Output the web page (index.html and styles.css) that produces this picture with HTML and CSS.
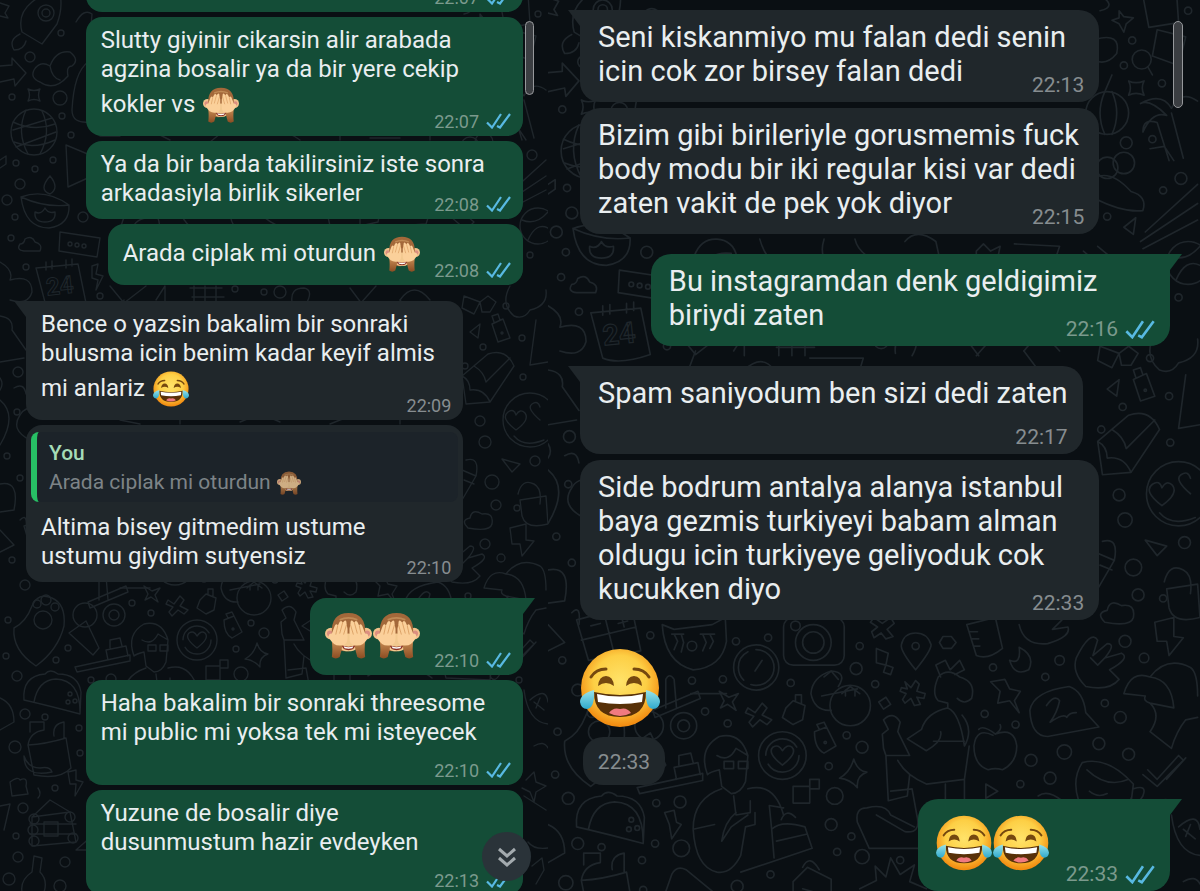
FILE: index.html
```html
<!DOCTYPE html>
<html lang="tr">
<head>
    <meta charset="UTF-8">
    <meta name="viewport" content="width=device-width, initial-scale=1.0">
    <title>Sohbet</title>

    <link rel="stylesheet" href="styles.css">
</head>
<body>
    <!-- Shared icons -->
    <svg class="defs" aria-hidden="true">
        <defs>
            <radialGradient id="face" cx="50%" cy="42%" r="56%">
                <stop offset="0" stop-color="#ffe36a"/>
                <stop offset=".6" stop-color="#fdcf45"/>
                <stop offset="1" stop-color="#f28d12"/>
            </radialGradient>
            <linearGradient id="tear" x1="0" y1="0" x2="0" y2="1">
                <stop offset="0" stop-color="#9be4ea"/>
                <stop offset="1" stop-color="#2fa9cc"/>
            </linearGradient>
            <linearGradient id="arm" x1="0" y1="0" x2="0" y2="1">
                <stop offset="0" stop-color="#c58a52"/>
                <stop offset="1" stop-color="#8b4c22"/>
            </linearGradient>
        </defs>
        <symbol id="laugh" viewBox="0 0 80 80">
            <circle cx="40" cy="40" r="39" fill="url(#face)"/>
            <path d="M11 29Q16 21 26 21M54 21Q64 21 69 29" fill="none" stroke="#75480f" stroke-width="3" stroke-linecap="round"/>
            <path d="M18 38Q19 28 26 28T34 38Q26 32 18 38zM46 38Q47 28 54 28T62 38Q54 32 46 38z" fill="#75480f"/>
            <path d="M14 44Q40 50 66 44Q66 69 40 69T14 44z" fill="#573008"/>
            <path d="M17 46Q40 51 63 46L62 54Q40 58 18 54z" fill="#fff"/>
            <path d="M29 65Q33 59 40 61Q47 59 51 65Q40 71 29 65z" fill="#f07a80"/>
            <path d="M14 42Q0 46 0 54Q1 61 7 61Q15 60 14 42zM66 42Q80 46 80 54Q79 61 73 61Q65 60 66 42z" fill="url(#tear)"/>
        </symbol>
        <symbol id="monkey" viewBox="0 0 48 48">
            <circle cx="6" cy="22" r="6" fill="#f3c28c"/>
            <circle cx="42" cy="22" r="6" fill="#f3c28c"/>
            <circle cx="5" cy="22" r="3" fill="#dc8f80"/>
            <circle cx="43" cy="22" r="3" fill="#dc8f80"/>
            <path d="M7 22Q6 1 24 1T41 22Q42 38 24 40T7 22z" fill="#a3683a"/>
            <path d="M15 8Q24 4 33 8" fill="none" stroke="#bf8a55" stroke-width="2"/>
            <path d="M14 30Q16 22 24 22T34 30Q35 40 24 40T14 30z" fill="#f2c98f"/>
            <path d="M17 34Q24 37 31 34Q30 39 24 39T17 34z" fill="#8a2f22"/>
            <path d="M19 35Q24 37 29 35L28 37Q24 38 20 37z" fill="#fff"/>
            <path d="M7 30L18 32Q17 40 15 46Q11 49 7 46Q8 38 7 30zM41 30L30 32Q31 40 33 46Q37 49 41 46Q40 38 41 30z" fill="url(#arm)"/>
            <path d="M4 26Q3 22 7 22L10 14Q12 11 13 14L15 10Q17 8 18 11L20 9Q22 8 22 12L23 17L23 27Q23 33 18 34Q9 36 4 26z" fill="#fbd09a"/>
            <path d="M44 26Q45 22 41 22L38 14Q36 11 35 14L33 10Q31 8 30 11L28 9Q26 8 26 12L25 17L25 27Q25 33 30 34Q39 36 44 26z" fill="#fbd09a"/>
            <path d="M13 14L11 23M18 11L15 22M22 13L19 23M35 14L37 23M30 11L33 22M26 13L29 23" fill="none" stroke="#dda367" stroke-width="1"/>
        </symbol>
        <symbol id="checks" viewBox="0 0 25 16">
            <path d="M1 9.500L6 14.500L15 1M11 13L14 14.500L24 1" fill="none" stroke="#58b9e2" stroke-width="2.200"/>
        </symbol>

        <!-- Wallpaper doodles -->
        <symbol id="doodles" viewBox="0 0 548 900">
            <g fill="none" stroke="#1f262b" stroke-width="1.400" stroke-linejoin="round" stroke-linecap="round">
                <!-- left edge, top to bottom -->
                <path d="M0 3L9 6L5 13L8 18L0 16M22 32Q17 14 32 2Q44 -8 60 -6Q63 8 57 24L42 44zM20 34Q8 40 14 50Q24 50 26 41M76 22Q84 8 92 14L88 62Q74 72 72 110Q72 124 90 122"/>
                <circle cx="46" cy="13" r="8"/><circle cx="46" cy="13" r="4"/>
                <path d="M0 66L12 65L12 58L26 73L15 86L14 79L0 82M34 70Q40 60 50 66Q56 50 70 52Q80 60 72 66Q66 66 68 76Q54 92 40 82Q30 78 34 70zM50 66Q52 78 60 80"/>
                <path d="M28 89Q34 92 40 89Q37 95 40 101Q34 98 28 101Q31 95 28 89z"/>
                <circle cx="34" cy="132" r="23"/><path d="M13 122Q34 132 55 124M14 142Q34 150 55 140M26 110Q16 132 28 154M42 111Q52 132 40 154M13 130L52 118M16 147L56 132"/>
                <path d="M66 145L90 155M66 145L68 187L90 177M0 160L6 156V164L0 168"/>
                <path d="M21 197Q45 208 69 205Q70 225 49 228Q25 228 21 197zM21 197Q45 188 69 205M50 176Q38 190 50 194Q60 188 50 176M35 212Q34 222 45 222Q56 222 55 212Q48 214 45 208Q41 215 35 212z"/>
                <path d="M24 251Q16 250 20 244Q24 244 25 239Q32 235 35 242Q43 244 40 251zM60 232L100 238L97 257L59 251z"/>
                <circle cx="70" cy="244" r="2"/><circle cx="77" cy="245" r="2"/><circle cx="84" cy="246" r="2"/>
                <path d="M36 268L78 264L86 303Q60 312 46 306zM46 270V262M52 269V261M66 268V260M72 266V259M0 262Q14 270 10 280Q32 274 32 292Q28 306 10 300M92 266L98 264L96 274L103 276L96 290L98 280L92 278z"/>
                <path d="M0 316Q14 318 12 330L26 350M0 362L24 358M0 378Q4 384 0 390M14 388Q24 382 26 394M0 400Q18 415 0 445M30 440Q10 430 20 415Q26 402 60 410M0 484Q20 480 14 510L0 512M0 530L14 545L0 552M20 520Q28 512 26 530"/>
                <path d="M14 628Q26 622 32 606Q38 592 52 598Q66 604 64 626Q58 650 36 666Q12 650 14 628z"/><circle cx="43" cy="620" r="9"/><circle cx="37" cy="604" r="4"/><circle cx="46" cy="600" r="5"/><circle cx="55" cy="607" r="4"/>
                <path d="M69 633L86 621L99 648L93 655zM75 667L130 655L130 661L77 672zM108 660L106 650L126 646L128 656M110 648V640L120 638L122 646"/>
                <path d="M24 700Q22 676 45 674Q50 668 58 674Q78 674 81 692L80 714Q50 706 24 700zM34 702Q38 680 56 679Q80 680 80 712"/>
                <circle cx="70" cy="694" r="2"/><circle cx="75" cy="701" r="2"/><circle cx="68" cy="702" r="2"/>
                <path d="M0 698Q14 704 14 722L0 730M28 745Q30 732 44 730V722H30V732M28 745L34 775Q60 780 71 768L66 738Q46 744 28 745M54 736Q52 724 64 722V738M24 756Q24 778 52 772Q50 766 40 768Q28 768 24 756zM68 772L76 770L76 780L83 782L75 796L76 784L70 784zM10 782Q18 776 20 780Q28 776 26 786L28 794L12 796z"/>
                <path d="M32 817L50 800L70 812M38 788Q42 794 38 798M32 817L70 812L76 842L32 846zM44 822H58V836H44zM30 824H76M30 834H76"/>
                <circle cx="34" cy="819" r="5"/><circle cx="33" cy="830" r="5"/><circle cx="34" cy="841" r="5"/><circle cx="70" cy="817" r="5"/><circle cx="73" cy="838" r="5"/>
                <path d="M0 806L10 804L4 830M34 856L42 858L40 872Q48 880 44 892H22Q20 880 32 872zM76 850L92 836V850z"/>

                <!-- strips between the bubbles -->
                <path d="M110 286L124 303L146 286M156 300L165 286V304M190 288H222M194 286V304M205 286V304M216 286V304M192 297H224M292 302Q290 288 304 288Q314 290 306 304M350 288L362 304M376 286L360 304M400 300Q414 280 430 300M120 232Q124 205 142 206T160 232M132 230Q136 216 154 218M178 206Q184 228 202 232M232 206Q224 232 260 236M258 206Q262 224 298 232M300 208Q310 196 326 208L330 226M360 216L366 210L372 216L380 212L378 222L360 226zM392 210L430 212L426 224L396 226"/>
                <path d="M100 136H120M150 130L170 140M210 142L225 130M260 135Q280 125 300 140M340 140V130M370 138H400M430 132V140M120 420L140 424M180 424V416M240 422Q260 412 280 422M330 424L350 416M400 424V416M120 588H150M230 590L260 584M118 316L124 300M165 316Q180 302 190 316M220 306H265L262 316M400 300L412 316"/>

                <!-- large open area -->
                <path d="M24 526L70 514L78 552L34 560zM28 543L74 532M47 520L56 556M36 531L44 529M62 524L64 532M59 529L67 527M96 530L106 534L138 530L149 524L150 544Q146 566 122 568Q98 562 96 530zM106 538L109 544L106 551M112 538L114 545L112 553M130 538L133 545L130 552M136 538L139 544L136 550M104 538H114M128 538H140"/>
                <circle cx="121" cy="548" r="4"/><circle cx="175" cy="566" r="19"/><circle cx="175" cy="566" r="15" stroke-dasharray="28 7"/><path d="M174 569L180 560M99 600V576Q102 570 106 576L108 600M88 602L126 586L128 592L90 608z"/>
                <circle cx="114" cy="615" r="11"/><circle cx="114" cy="615" r="5"/><circle cx="85" cy="615" r="12"/>
                <rect x="198" y="524" width="51" height="40" rx="8"/><circle cx="223" cy="545" r="15"/><circle cx="223" cy="545" r="9"/><circle cx="208" cy="531" r="4"/>
                <path d="M274 524L281 529L288 524L291 529L285 534L290 540L284 542L280 537L274 541L272 536L277 532L271 528z"/>
                <path d="M309 568Q296 552 297 547Q299 537 309 537T322 547Q322 552 309 568z"/><circle cx="309" cy="548" r="3"/>
                <path d="M332 540L339 540L343 545L339 550H332L329 545zM352 530L376 524L382 550Q370 560 360 556zM355 536H361M356 542H362M358 548H363M396 530Q400 548 420 546Q440 540 437 532L424 534L432 526M396 549Q410 556 404 568Q392 574 388 560Q398 564 396 549z"/>
                <path d="M452 582Q440 570 444 558Q456 534 462 543L458 556L470 546Q478 546 468 558L482 554Q490 558 472 568L480 576Q472 586 452 582zM456 558L462 564L468 558M510 528L526 524L526 540L534 541L522 556L520 544L512 544z"/>
                <path d="M484 588Q490 568 506 574Q524 576 526 600L506 596Q500 594 502 590zM506 574Q520 556 540 566Q546 570 546 590M506 596Q516 606 506 620L524 634Q528 620 536 610L546 608M276 550L286 554L284 564L276 562zM284 564L290 566L288 572L282 570z"/>
                <path d="M244 582Q252 570 238 569Q222 574 221 588Q224 603 238 602"/><circle cx="254" cy="598" r="17"/><path d="M232 574L238 569L244 576M247 588L254 582L262 588M250 590V585M258 590V585"/>
                <path d="M144 586L152 591L160 588L155 595L158 602L151 597L145 600L148 594zM168 600L174 604L180 596L184 600L180 606L188 610L184 614L178 610L172 616L169 612L173 607L166 604zM200 600L206 594L216 598L214 610L206 614L197 608zM208 594V589H213V596M278 595L284 591L288 597L282 601z"/>
                <path d="M300 578L305 583L309 577L312 580L310 586L317 588L316 592L310 591L313 597L308 598L305 592L300 596L298 593L301 588L296 586L297 583L302 584z"/>
                <path d="M328 574Q322 588 328 594L336 596L336 600M328 574Q336 566 346 574Q360 578 356 592Q350 598 344 592M330 574L326 564L334 560L338 568L346 560L350 568L342 572M336 600Q318 604 314 618L302 626L318 636Q332 628 330 620M336 600Q346 604 350 632M324 628H350M350 632Q358 618 348 606M282 634L281 622L286 618L282 610Q290 602 296 612L294 620L304 640H284zM294 644Q300 656 318 664L350 660L354 632M350 660V690M334 664V688M304 656L302 674L286 678L284 640M288 670L306 668L310 690Q314 706 300 704L276 690M260 696Q258 684 268 684Q284 680 288 690L308 700M260 696L270 718H312"/>
                <path d="M372 578L384 576L388 584L397 586L392 594L396 604L388 594L378 596L380 586zM405 602Q408 586 438 582Q450 586 452 604L463 616L420 624Q406 624 405 602zM419 598Q426 588 430 594Q428 604 422 612Q434 604 436 608Q438 604 444 604"/>
                <path d="M374 623Q360 616 358 632Q358 648 370 652Q376 650 382 652Q394 646 394 632Q392 616 376 622Q366 614 362 618M376 622Q382 618 380 614"/>
                <circle cx="197" cy="640" r="20"/><circle cx="197" cy="640" r="14" stroke-dasharray="36 8"/><path d="M197 648Q184 638 189 633Q194 630 197 636Q201 630 205 633Q210 638 197 648zM224 620L234 616L242 632L232 638Q224 634 224 620zM228 618L226 614L232 612L234 616M257 643Q260 653 268 654Q259 657 260 667Q254 660 245 659Q254 654 257 643z"/>
                <circle cx="233" cy="629" r="1"/>
                <path d="M206 666H220V680H206zM220 660H228V668H220zM134 656Q126 634 144 624Q162 620 168 640L166 662Q162 672 154 672L146 666L144 652Q136 654 134 656M142 640Q152 646 158 634L168 640M148 645H156V651H148zM160 645H168V651H160zM146 668Q122 676 122 702Q124 734 142 738Q154 740 162 724L166 700L174 698V688M156 674L158 690L170 688V678M168 668Q190 662 198 690M158 688Q148 696 146 712L154 700L168 690M122 702L140 698M162 738L222 718L216 700Q196 694 188 702L190 726M188 702L186 682L198 684M192 712L218 706M196 694Q200 684 208 692"/>
                <path d="M98 688L106 686L108 696L112 698L104 710L102 698z"/>
                <path d="M449 646Q470 640 492 664L490 680L446 678Q440 660 449 646zM453 652Q470 668 488 660M492 668Q504 664 500 674Q494 684 490 676M455 670Q462 676 470 672M504 652L512 660L530 640L534 644L512 666L500 656M520 660L536 642M368 664L378 670L368 676zM412 674Q420 668 432 678"/>

                <!-- right edge, top to bottom -->
                <path d="M462 0Q480 10 464 14M480 14L484 19L492 20L486 25L484 32L480 25L474 22L480 20zM499 -4L528 -6L530 24L505 28zM512 30L536 36L530 60L508 52z"/>
                <circle cx="499" cy="55" r="8"/><path d="M504 61L508 68M460 38Q482 32 478 50Q470 60 460 56M488 73Q494 76 501 73Q498 79 501 85Q494 82 488 85Q491 79 488 73z"/>
                <circle cx="470" cy="100" r="18"/><path d="M468 82Q460 100 468 118M474 82Q482 100 474 118M468 82L474 68M522 140L512 108Q500 104 500 116Q508 98 520 102Q506 88 498 92Q516 82 524 96Q532 80 546 90M524 100L534 138M506 130L518 128L526 140"/>
                <circle cx="484" cy="142" r="9"/><circle cx="470" cy="146" r="9"/><path d="M460 154Q474 148 490 166Q504 170 500 182Q484 184 460 172M484 196L494 188L492 202zM502 200L546 160M498 208L546 176M500 214L546 190"/>
                <circle cx="538" cy="226" r="18"/><path d="M522 220Q536 226 548 212M528 240Q536 222 548 228M462 212L474 222L466 230L450 216M466 262Q480 250 490 262"/>
                <path d="M464 296L480 302L474 314L462 308zM480 302L488 296L496 302L490 312L482 312zM510 286Q500 304 514 316Q524 320 530 310Q548 306 546 290M492 324L503 319L510 338L498 342zM494 322L492 316L498 314L500 320M470 332L480 324L478 338z"/>
                <circle cx="502" cy="333" r="1"/><path d="M462 376L488 354Q506 348 514 366L490 402L466 404zM462 376Q470 380 470 390Q484 388 490 402M474 366Q484 372 486 382L510 358M536 320L530 365L548 362"/>
                <circle cx="530" cy="420" r="27"/><path d="M516 430Q500 418 508 412Q514 408 516 415Q520 408 525 413Q530 420 516 430zM540 420Q526 408 532 404Q538 400 540 407M514 436Q524 448 544 440M466 460Q480 456 476 476L462 500M462 470L476 476M464 480L474 484M502 459L520 464L512 472zM518 494Q522 478 534 484Q542 488 540 504M520 500L546 496L548 524Q526 530 522 516z"/>
                <path d="M468 528Q460 520 470 518Q472 508 482 514Q494 512 492 524Q490 532 468 528zM530 700Q546 686 548 702M524 690Q528 722 548 724M534 702L544 710M540 698L536 708M534 746Q544 740 548 748M526 780L534 772L536 782L546 786L536 792L534 802L530 792L522 788M528 842Q534 850 548 848M532 866L542 858L544 870L536 884M524 796L546 810"/>
                <path d="M90 780L104 740Q108 732 116 736L138 754L118 770zM206 780V746L218 734L238 744V780zM214 734Q220 722 228 736M214 752L228 756M212 762L228 766M262 752L276 745L275 733L284 742L288 726L296 740L308 732L304 746L318 752"/>

                <!-- loose bubbles -->
                <circle cx="60" cy="98" r="7"/><circle cx="30" cy="57" r="5"/><circle cx="61" cy="33" r="3"/><circle cx="12" cy="97" r="3"/><circle cx="62" cy="116" r="3"/><circle cx="71" cy="135" r="3"/><circle cx="16" cy="163" r="3"/><circle cx="35" cy="169" r="3"/><circle cx="53" cy="160" r="3"/><circle cx="20" cy="184" r="5"/><circle cx="7" cy="200" r="5"/><circle cx="83" cy="217" r="5"/><circle cx="15" cy="217" r="3"/><circle cx="11" cy="238" r="3"/><circle cx="26" cy="267" r="3"/><circle cx="100" cy="296" r="3"/><circle cx="235" cy="289" r="3"/><circle cx="264" cy="292" r="3"/><circle cx="280" cy="292" r="6"/>
                <circle cx="18" cy="372" r="5"/><circle cx="17" cy="412" r="3"/><circle cx="7" cy="456" r="3"/><circle cx="20" cy="478" r="3"/><circle cx="12" cy="560" r="3"/><circle cx="25" cy="585" r="5"/><circle cx="8" cy="620" r="3"/><circle cx="6" cy="656" r="3"/><circle cx="17" cy="676" r="5"/><circle cx="56" cy="660" r="3"/><circle cx="68" cy="648" r="3"/><circle cx="25" cy="714" r="5"/><circle cx="45" cy="717" r="3"/><circle cx="15" cy="747" r="6"/><circle cx="79" cy="728" r="3"/><circle cx="80" cy="753" r="3"/><circle cx="23" cy="808" r="5"/><circle cx="55" cy="788" r="3"/><circle cx="16" cy="836" r="3"/><circle cx="18" cy="857" r="5"/><circle cx="65" cy="862" r="5"/><circle cx="9" cy="879" r="6"/><circle cx="60" cy="886" r="6"/>
                <circle cx="86" cy="539" r="3"/><circle cx="158" cy="544" r="3"/><circle cx="185" cy="541" r="3"/><circle cx="262" cy="548" r="3"/><circle cx="259" cy="567" r="5"/><circle cx="121" cy="577" r="3"/><circle cx="147" cy="576" r="3"/><circle cx="204" cy="579" r="3"/><circle cx="275" cy="580" r="3"/><circle cx="374" cy="566" r="3"/><circle cx="430" cy="560" r="4"/><circle cx="418" cy="574" r="3"/><circle cx="485" cy="544" r="5"/><circle cx="501" cy="558" r="4"/><circle cx="132" cy="603" r="3"/><circle cx="151" cy="613" r="3"/><circle cx="251" cy="623" r="3"/><circle cx="264" cy="633" r="5"/><circle cx="236" cy="649" r="3"/><circle cx="367" cy="605" r="3"/><circle cx="393" cy="614" r="3"/><circle cx="468" cy="596" r="3"/><circle cx="481" cy="608" r="5"/><circle cx="463" cy="630" r="5"/><circle cx="434" cy="637" r="6"/><circle cx="488" cy="639" r="5"/><circle cx="406" cy="644" r="5"/><circle cx="422" cy="659" r="5"/><circle cx="397" cy="664" r="3"/><circle cx="241" cy="674" r="7"/><circle cx="238" cy="698" r="5"/><circle cx="255" cy="708" r="3"/><circle cx="91" cy="680" r="3"/><circle cx="111" cy="679" r="5"/><circle cx="112" cy="718" r="7"/><circle cx="90" cy="714" r="3"/><circle cx="243" cy="721" r="3"/><circle cx="264" cy="725" r="6"/><circle cx="159" cy="750" r="5"/><circle cx="187" cy="740" r="3"/><circle cx="296" cy="728" r="3"/>
                <circle cx="491" cy="39" r="3"/><circle cx="484" cy="60" r="3"/><circle cx="516" cy="75" r="3"/><circle cx="538" cy="14" r="3"/><circle cx="486" cy="125" r="5"/><circle cx="508" cy="122" r="3"/><circle cx="532" cy="155" r="5"/><circle cx="517" cy="165" r="3"/><circle cx="470" cy="187" r="3"/><circle cx="530" cy="255" r="3"/><circle cx="506" cy="306" r="3"/><circle cx="483" cy="347" r="3"/><circle cx="522" cy="338" r="3"/><circle cx="465" cy="366" r="3"/><circle cx="523" cy="377" r="3"/><circle cx="480" cy="421" r="5"/><circle cx="485" cy="442" r="6"/><circle cx="535" cy="461" r="5"/><circle cx="492" cy="482" r="7"/><circle cx="496" cy="505" r="5"/><circle cx="517" cy="508" r="3"/><circle cx="519" cy="680" r="3"/>
            </g>
            <text x="46" y="294" transform="rotate(-6 60 286)" font-family="Roboto, sans-serif" font-size="24" font-weight="700" fill="none" stroke="#1f262b">24</text>
        </symbol>
    </svg>

    <main class="chats">
        <section class="panel">
            <svg class="wallpaper" viewBox="0 0 548 900" aria-hidden="true"><use href="#doodles"/></svg>
            <div class="scrollbar"></div>

            <div class="thread cut">
                <article class="bubble out wide">
                    <p><br><br></p>
                    <footer><time>22:07</time><svg class="checks"><use href="#checks"/></svg></footer>
                </article>
                <article class="bubble out wide">
                    <p>Slutty giyinir cikarsin alir arabada<br>agzina bosalir ya da bir yere cekip<br><span class="line">kokler vs <svg class="emoji" role="img" aria-label="🙈"><use href="#monkey"/></svg></span></p>
                    <footer><time>22:07</time><svg class="checks"><use href="#checks"/></svg></footer>
                </article>
                <article class="bubble out wide">
                    <p>Ya da bir barda takilirsiniz iste sonra<br>arkadasiyla birlik sikerler</p>
                    <footer><time>22:08</time><svg class="checks"><use href="#checks"/></svg></footer>
                </article>
                <article class="bubble out short">
                    <p><span class="line">Arada ciplak mi oturdun <svg class="emoji" role="img" aria-label="🙈"><use href="#monkey"/></svg></span></p>
                    <footer><time>22:08</time><svg class="checks"><use href="#checks"/></svg></footer>
                </article>

                <article class="bubble in wide first">
                    <p>Bence o yazsin bakalim bir sonraki<br>bulusma icin benim kadar keyif almis<br><span class="line">mi anlariz <svg class="emoji" role="img" aria-label="😂"><use href="#laugh"/></svg></span></p>
                    <footer><time>22:09</time></footer>
                </article>
                <article class="bubble in wide">
                    <blockquote>
                        <strong>You</strong>
                        <span>Arada ciplak mi oturdun <svg class="emoji" role="img" aria-label="🙈"><use href="#monkey"/></svg></span>
                    </blockquote>
                    <p>Altima bisey gitmedim ustume<br>ustumu giydim sutyensiz</p>
                    <footer><time>22:10</time></footer>
                </article>

                <article class="bubble out short first">
                    <p class="big"><svg class="emoji" role="img" aria-label="🙈"><use href="#monkey"/></svg><svg class="emoji" role="img" aria-label="🙈"><use href="#monkey"/></svg></p>
                    <footer><time>22:10</time><svg class="checks"><use href="#checks"/></svg></footer>
                </article>
                <article class="bubble out wide">
                    <p>Haha bakalim bir sonraki threesome<br>mi public mi yoksa tek mi isteyecek</p>
                    <footer class="below"><time>22:10</time><svg class="checks"><use href="#checks"/></svg></footer>
                </article>
                <article class="bubble out wide">
                    <p>Yuzune de bosalir diye<br>dusunmustum hazir evdeyken</p>
                    <footer class="below"><time>22:13</time><svg class="checks"><use href="#checks"/></svg></footer>
                </article>
            </div>

            <button class="to-bottom" type="button" aria-label="En alta git">
                <svg viewBox="0 0 20 22"><path d="M2 3L10 10L18 3M2 12L10 19L18 12" fill="none" stroke="#a3aaae" stroke-width="3"/></svg>
            </button>
        </section>

        <section class="panel large">
            <svg class="wallpaper" viewBox="0 5 548 900" aria-hidden="true"><use href="#doodles"/></svg>
            <div class="scrollbar"></div>

            <div class="thread">
                <article class="bubble in wide tail">
                    <p>Seni kiskanmiyo mu falan dedi senin<br>icin cok zor birsey falan dedi</p>
                    <footer><time>22:13</time></footer>
                </article>
                <article class="bubble in wide">
                    <p>Bizim gibi birileriyle gorusmemis fuck<br>body modu bir iki regular kisi var dedi<br>zaten vakit de pek yok diyor</p>
                    <footer><time>22:15</time></footer>
                </article>

                <article class="bubble out wide first">
                    <p>Bu instagramdan denk geldigimiz<br>biriydi zaten</p>
                    <footer><time>22:16</time><svg class="checks"><use href="#checks"/></svg></footer>
                </article>

                <article class="bubble in first">
                    <p>Spam saniyodum ben sizi dedi zaten</p>
                    <footer class="below"><time>22:17</time></footer>
                </article>
                <article class="bubble in wide">
                    <p>Side bodrum antalya alanya istanbul<br>baya gezmis turkiyeyi babam alman<br>oldugu icin turkiyeye geliyoduk cok<br>kucukken diyo</p>
                    <footer><time>22:33</time></footer>
                </article>
                <article class="sticker">
                    <svg role="img" aria-label="😂"><use href="#laugh"/></svg>
                    <time>22:33</time>
                </article>

                <article class="bubble out short first">
                    <p class="big"><svg class="emoji" role="img" aria-label="😂"><use href="#laugh"/></svg><svg class="emoji" role="img" aria-label="😂"><use href="#laugh"/></svg></p>
                    <footer><time>22:33</time><svg class="checks"><use href="#checks"/></svg></footer>
                </article>
            </div>
        </section>
    </main>
</body>
</html>
```
FILE: styles.css
```css
* {
    margin: 0;
    padding: 0;
    box-sizing: border-box;
}
body {
    background-color: #0a0f13;
    font-family: Roboto, sans-serif;
    overflow: hidden;
}
.defs {
    position: absolute;
    width: 0;
    height: 0;
}
.chats {
    display: grid;
    grid-template-columns: 548fr 652fr;
    height: 100vh;
}
.panel {
    position: relative;
    overflow: hidden;
    min-width: 0;
    font-size: 24px;
    line-height: 29px;
    color: #e9eef0;
}
.wallpaper {
    position: absolute;
    top: 0;
    left: 0;
    width: 100%;
}
.thread {
    position: relative;
    display: flex;
    flex-direction: column;
    align-items: flex-start;
    gap: 5px;
    padding: 0 25px 0 26px;
}
/* first message is scrolled past the top */
.cut {
    margin-top: -66px;
}

/* Bubbles */
.bubble {
    position: relative;
    display: flex;
    flex-direction: column;
    padding: 9px 12px 4px 15px;
    border-radius: 16px;
    white-space: nowrap;
}
.in {
    background-color: #20272b;
}
.out {
    background-color: #144d37;
    align-self: flex-end;
}
.wide {
    width: 88%;
}
.short p {
    padding-right: 91px;
}
.first {
    margin-top: 11px;
}
.in.first, .in.tail {
    border-top-left-radius: 0;
}
.out.first {
    border-top-right-radius: 0;
}
.first::before, .tail::before {
    content: "";
    position: absolute;
    top: 0;
    width: 12px;
    height: 16px;
}
.in.first::before, .in.tail::before {
    right: 100%;
    background-color: #20272b;
    clip-path: polygon(0 0, 100% 0, 100% 100%);
}
.out.first::before {
    left: 100%;
    background-color: #144d37;
    clip-path: polygon(0 0, 100% 0, 0 100%);
}
.line {
    display: flex;
    align-items: center;
    gap: 8px;
    height: 41px;
}
.emoji {
    width: 36px;
    height: 36px;
    flex: none;
}
.big {
    display: flex;
    align-items: center;
    gap: 1px;
    height: 57px;
}
.big .emoji {
    width: 47px;
    height: 47px;
}
footer {
    display: flex;
    align-items: center;
    align-self: flex-end;
    gap: 7px;
    height: 22px;
    margin-top: -15px;
    font-size: 18px;
    color: #878d90;
}
.out footer {
    color: #7b9a8d;
}
.below {
    margin-top: 12px;
}
.checks {
    width: 25px;
    height: 16px;
}
blockquote {
    display: flex;
    flex-direction: column;
    height: 70px;
    margin: -2px -7px 11px -10px;
    padding: 7px 12px;
    border-left: 6px solid #27c065;
    border-radius: 8px;
    background-color: #1c2329;
    font-size: 21px;
    color: #7d8387;
}
blockquote strong {
    font-weight: 500;
    color: #a5dcb7;
}
blockquote span {
    display: flex;
    align-items: center;
    gap: 6px;
}
blockquote .emoji {
    width: 24px;
    height: 24px;
    opacity: .8;
}

/* Floating controls */
.scrollbar {
    position: absolute;
    top: 21px;
    right: 14px;
    width: 9px;
    height: 74px;
    border: 1px solid #96989b;
    border-radius: 5px;
    background-color: #3b3e42;
}
.to-bottom {
    position: absolute;
    right: 17px;
    bottom: 10px;
    display: flex;
    align-items: center;
    justify-content: center;
    width: 49px;
    height: 49px;
    border: none;
    border-radius: 50%;
    background-color: #2a3339;
    cursor: pointer;
}
.to-bottom svg {
    width: 20px;
    height: 22px;
}

/* Right chat, zoomed in */
.large {
    font-size: 29px;
    line-height: 34px;
}
.large .thread {
    gap: 6px;
    padding: 10px 30px 0 32px;
}
.large .bubble {
    padding: 10px 15px 4px 18px;
    border-radius: 20px;
}
.large .first {
    margin-top: 14px;
}
.large .in.first, .large .in.tail {
    border-top-left-radius: 0;
}
.large .out.first {
    border-top-right-radius: 0;
}
.large .short p {
    padding-right: 106px;
}
.large footer {
    height: 26px;
    margin-top: -16px;
    font-size: 21px;
}
.large .below {
    margin-top: 14px;
}
.large .checks {
    width: 30px;
    height: 19px;
}
.large .big {
    height: 68px;
}
.large .big .emoji {
    width: 56px;
    height: 56px;
}
.large .scrollbar {
    right: 17px;
    width: 10px;
    height: 87px;
}
.sticker {
    display: flex;
    flex-direction: column;
    gap: 9px;
    margin: 22px 0 -6px;
}
.sticker svg {
    width: 80px;
    height: 80px;
}
.sticker time {
    margin-left: 3px;
    width: 82px;
    height: 48px;
    border-radius: 20px;
    background-color: #20272b;
    font-size: 21px;
    line-height: 50px;
    text-align: center;
    color: #878d90;
}
```
